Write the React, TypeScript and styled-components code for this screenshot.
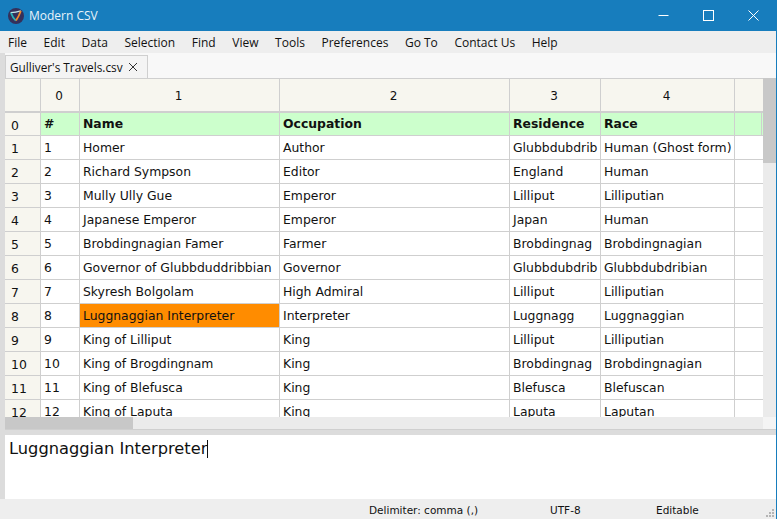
import React from 'react';
import styled, { createGlobalStyle } from 'styled-components';

const Global = createGlobalStyle`
  html, body { margin: 0; padding: 0; background: #eeeeee; }
  * { box-sizing: border-box; }
`;

const COLS = '36px 39px 200px 230px 91px 134px 28px';
const UI = '"Open Sans", "Noto Sans", sans-serif';
const CELL = '"DejaVu Sans", Verdana, sans-serif';

const Window = styled.div`
  width: 777px; height: 519px; display: flex; flex-direction: column;
  overflow: hidden; background: #eeeeee; font-family: ${UI};
  border-right: 1px solid #177dbd;
`;
const TitleBar = styled.div`
  height: 31px; flex: none; background: #177dbd; display: flex; align-items: center;
  padding-left: 8px; color: #e8f3fa; font-size: 12px;
`;
const AppTitle = styled.span`margin-left: 5px; flex: 1;`;
const WinButtons = styled.div`display: flex;`;
const WinButton = styled.div`
  width: 45px; height: 31px; display: flex; align-items: center; justify-content: center;
`;
const MenuBar = styled.div`
  height: 22px; flex: none; background: #eeeeee; display: flex; align-items: center;
  padding-left: 8px; gap: 16.6px; font-size: 12px; color: #111;
`;
const Body = styled.div`flex: 1; display: flex; min-height: 0;`;
const LeftStrip = styled.div`width: 5px; flex: none; background: #dcdcdc; margin-bottom: 20px;`;
const Main = styled.div`flex: 1; display: flex; flex-direction: column; min-width: 0;`;
const TabBar = styled.div`height: 25px; flex: none; background: #f8f8f8; display: flex; align-items: flex-end;`;
const Tab = styled.div`
  width: 143px; height: 23px; background: #f4f4f4; border: 1px solid #cfcfcf; border-bottom: none;
  display: flex; align-items: center; padding-left: 4px; gap: 5px; font-size: 11.8px; color: #111;
  white-space: nowrap;
`;
const TableArea = styled.div`height: 351px; flex: none; display: flex;`;
const TableClip = styled.div`
  flex: 1; display: flex; flex-direction: column; min-width: 0; border-top: 1px solid #cfcfcf;
`;
const GridView = styled.div`flex: 1; min-height: 0; overflow: hidden; background: #ebebeb;`;
const HeaderRow = styled.div`
  display: grid; grid-template-columns: ${COLS}; height: 34px; border-bottom: 2px solid #cfcfcf;
`;
const HeaderCell = styled.div`
  background: #f7f6ef; border-right: 1px solid #cfcfcf; display: flex; align-items: center;
  justify-content: center; font-family: ${CELL}; font-size: 12px; color: #111;
  padding: 2px 2px 0 0;
  &:last-child { border-right: none; }
`;
const DataRow = styled.div<{ $height: number }>`
  display: grid; grid-template-columns: ${COLS}; height: ${p => p.$height}px;
  border-bottom: 1px solid #cfcfcf;
`;
const RowHead = styled.div`
  background: #f7f6ef; border-right: 1px solid #cfcfcf; display: flex; align-items: center;
  padding-left: 6px; font-family: ${CELL}; font-size: 12.4px; color: #111; padding-top: 2px;
`;
const Cell = styled.div<{ $bg: string; $bold?: boolean }>`
  background: ${p => p.$bg}; border-right: 1px solid #cfcfcf; display: flex; align-items: center;
  padding: 0 0 ${p => (p.$bold ? 2 : 0)}px 3px; font-family: ${CELL}; font-size: 12.4px; color: #111;
  white-space: nowrap; overflow: hidden; font-weight: ${p => (p.$bold ? 700 : 400)};
`;
const TrailingCell = styled.div<{ $green?: boolean }>`
  background: ${p => (p.$green ? '#ccffcc' : '#ffffff')};
  box-shadow: ${p => (p.$green ? 'inset -1px 0 0 #ccffcc, inset -2px 0 0 #cfcfcf' : 'none')};
`;
const HScroll = styled.div`height: 12px; flex: none; background: #ebebeb; display: flex;`;
const HThumb = styled.div`width: 128px; background: #c8c8c8;`;
const VScroll = styled.div`
  width: 13px; flex: none; background: #ebebeb; display: flex; flex-direction: column;
  justify-content: space-between;
`;
const VThumb = styled.div`height: 85px; background: #c8c8c8;`;
const Corner = styled.div`height: 12px; background: #f4f4f4;`;
const Divider = styled.div`height: 6px; flex: none; background: #dcdcdc; border-top: 1px solid #cfcfcf;`;
const Editor = styled.div`
  height: 64px; flex: none; background: #fff; padding: 3px 4px; font-family: ${CELL};
  font-size: 16.25px; line-height: 22px; color: #111; display: flex; align-items: flex-start;
  white-space: nowrap;
`;
const Caret = styled.span`display: inline-block; width: 1px; height: 18px; margin-top: 2px; background: #111;`;
const StatusBar = styled.div`
  height: 20px; flex: none; background: #eeeeee; position: relative; display: grid;
  grid-template-columns: 369px 181px 106px auto; align-items: center; font-family: ${CELL};
  font-size: 10.5px; color: #111; margin-left: -5px; padding-top: 2px;
`;
const StatusItem = styled.span<{ $col: number }>`grid-column: ${p => p.$col}; white-space: nowrap;`;
const Grip = styled.svg`position: absolute; right: 1px; bottom: 1px;`;

const header = ['#', 'Name', 'Occupation', 'Residence', 'Race'];
const rows = [
  ['1', 'Homer', 'Author', 'Glubbdubdrib', 'Human (Ghost form)'],
  ['2', 'Richard Sympson', 'Editor', 'England', 'Human'],
  ['3', 'Mully Ully Gue', 'Emperor', 'Lilliput', 'Lilliputian'],
  ['4', 'Japanese Emperor', 'Emperor', 'Japan', 'Human'],
  ['5', 'Brobdingnagian Famer', 'Farmer', 'Brobdingnag', 'Brobdingnagian'],
  ['6', 'Governor of Glubbduddribbian', 'Governor', 'Glubbdubdrib', 'Glubbdubdribian'],
  ['7', 'Skyresh Bolgolam', 'High Admiral', 'Lilliput', 'Lilliputian'],
  ['8', 'Luggnaggian Interpreter', 'Interpreter', 'Luggnagg', 'Luggnaggian'],
  ['9', 'King of Lilliput', 'King', 'Lilliput', 'Lilliputian'],
  ['10', 'King of Brogdingnam', 'King', 'Brobdingnag', 'Brobdingnagian'],
  ['11', 'King of Blefusca', 'King', 'Blefusca', 'Blefuscan'],
  ['12', 'King of Laputa', 'King', 'Laputa', 'Laputan'],
];
const menus = ['File', 'Edit', 'Data', 'Selection', 'Find', 'View', 'Tools', 'Preferences', 'Go To', 'Contact Us', 'Help'];

const Logo = () => (
  <svg width="16" height="16" viewBox="0 0 16 16">
    <circle cx="8" cy="8" r="8" fill="#35305a" />
    <path d="M2.6 4.6 Q8 4.2 12.8 2.8" fill="none" stroke="#bfe6ea" strokeWidth="1.2" />
    <path d="M3 5 Q4.6 9.5 7.8 12.6" fill="none" stroke="#27b3b8" strokeWidth="1.8" />
    <path d="M12.8 3 Q11 8 8 12.6" fill="none" stroke="#f28a2a" strokeWidth="1.8" />
    <path d="M6 6.4 L9.4 6 L8 9 Z" fill="#35305a" />
  </svg>
);

export default function App() {
  return (
    <Window>
      <Global />
      <TitleBar>
        <Logo />
        <AppTitle>Modern CSV</AppTitle>
        <WinButtons>
          <WinButton>
            <svg width="11" height="11" viewBox="0 0 11 11"><path d="M0.5 5.5H10.5" stroke="#fff" /></svg>
          </WinButton>
          <WinButton>
            <svg width="11" height="11" viewBox="0 0 11 11"><rect x="0.5" y="0.5" width="10" height="10" fill="none" stroke="#fff" /></svg>
          </WinButton>
          <WinButton>
            <svg width="11" height="11" viewBox="0 0 11 11"><path d="M0.5 0.5L10.5 10.5M10.5 0.5L0.5 10.5" stroke="#fff" /></svg>
          </WinButton>
        </WinButtons>
      </TitleBar>
      <MenuBar>{menus.map(m => <span key={m}>{m}</span>)}</MenuBar>
      <Body>
        <LeftStrip />
        <Main>
          <TabBar>
            <Tab>
              Gulliver's Travels.csv
              <svg width="10" height="10" viewBox="0 0 10 10"><path d="M1 1L9 9M9 1L1 9" stroke="#333" /></svg>
            </Tab>
          </TabBar>
          <TableArea>
            <TableClip>
              <GridView>
                <HeaderRow>
                  {['', '0', '1', '2', '3', '4', ''].map((h, i) => <HeaderCell key={i}>{h}</HeaderCell>)}
                </HeaderRow>
                <DataRow $height={23}>
                  <RowHead>0</RowHead>
                  {header.map(h => <Cell key={h} $bg="#ccffcc" $bold>{h}</Cell>)}
                  <TrailingCell $green />
                </DataRow>
                {rows.map(r => (
                  <DataRow key={r[0]} $height={24}>
                    <RowHead>{r[0]}</RowHead>
                    {r.map((c, i) => (
                      <Cell key={i} $bg={r[0] === '8' && i === 1 ? '#ff8c00' : '#ffffff'}>{c}</Cell>
                    ))}
                    <TrailingCell />
                  </DataRow>
                ))}
              </GridView>
              <HScroll><HThumb /></HScroll>
            </TableClip>
            <VScroll><VThumb /><Corner /></VScroll>
          </TableArea>
          <Divider />
          <Editor>Luggnaggian Interpreter<Caret /></Editor>
          <StatusBar>
            <StatusItem $col={2}>Delimiter: comma (,)</StatusItem>
            <StatusItem $col={3}>UTF-8</StatusItem>
            <StatusItem $col={4}>Editable</StatusItem>
            <Grip width="10" height="10" viewBox="0 0 10 10" fill="#b5b5b5">
              <rect x="7" y="1" width="2" height="2" />
              <rect x="4" y="4" width="2" height="2" />
              <rect x="7" y="4" width="2" height="2" />
              <rect x="1" y="7" width="2" height="2" />
              <rect x="4" y="7" width="2" height="2" />
              <rect x="7" y="7" width="2" height="2" />
            </Grip>
          </StatusBar>
        </Main>
      </Body>
    </Window>
  );
}
